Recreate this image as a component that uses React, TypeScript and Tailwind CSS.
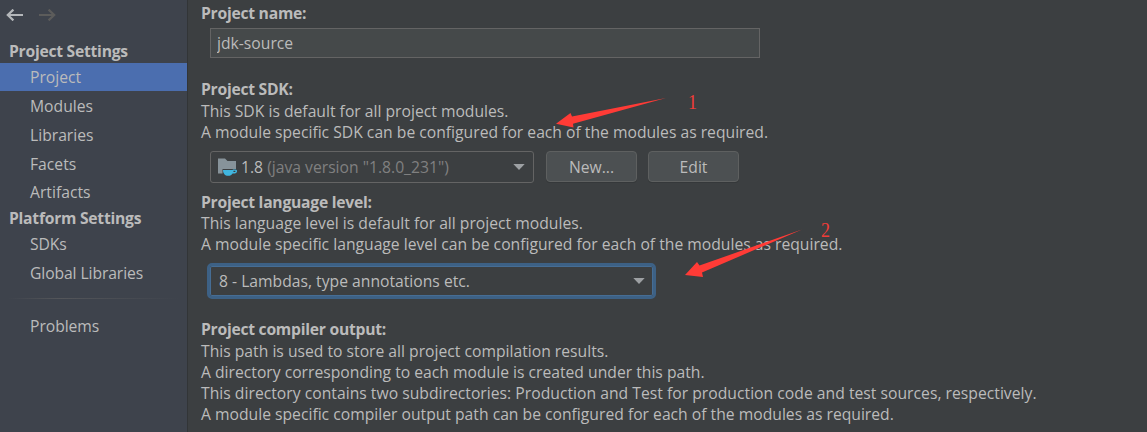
import type { ReactNode } from 'react';

type SideItem = { label: string; selected?: boolean };

const projectItems: SideItem[] = [
  { label: 'Project', selected: true },
  { label: 'Modules' },
  { label: 'Libraries' },
  { label: 'Facets' },
  { label: 'Artifacts' },
];

function NavItem({ label, selected }: SideItem) {
  return (
    <li className={selected ? 'flex h-7 items-center bg-[#4b6eaf] pl-[30px] pt-0.5' : 'flex h-7 items-center pl-[30px] pt-0.5'}>
      {label}
    </li>
  );
}

function NavHeading({ children }: { children: ReactNode }) {
  return <h2 className="pl-[9px] font-bold leading-[21px] tracking-[-0.26px]">{children}</h2>;
}

function Heading({ children }: { children: ReactNode }) {
  return <h3 className="font-bold leading-[21px] tracking-[-0.26px]">{children}</h3>;
}

function Caret() {
  return (
    <svg className="h-[6px] w-[12px] shrink-0" viewBox="0 0 12 6">
      <path d="M0.3 0H11.7L6 6Z" fill="#9da0a3" />
    </svg>
  );
}

function JdkIcon() {
  return (
    <svg className="h-[18px] w-[20px] shrink-0" viewBox="0 0 20 18">
      <path d="M0 0.5H7L9.5 3H18V11H4.5V15.5H0Z" fill="#87939a" />
      <path d="M5 12H14.8V11.6H17.3C19.8 11.6 19.8 15.4 16.6 15.4H14.6C13.6 17 12.3 17.8 10.2 17.8C7 17.8 5 15.5 5 12Z" fill="#40b6e0" />
      <path d="M15.6 12.8H17.4V14.1H15.3Z" fill="#3c3f41" />
    </svg>
  );
}

function PushButton({ children }: { children: ReactNode }) {
  return (
    <button className="h-[31px] w-[91px] rounded-[4px] border border-[#5e6060] bg-[#4c5052] leading-[30px] shadow-[0_1px_0_#35383a]">
      {children}
    </button>
  );
}

export default function App() {
  return (
    <div className="relative flex h-[432px] w-[1147px] overflow-hidden bg-[#3c3f41] font-['Open_Sans','Noto_Sans',sans-serif] text-[15.7px] text-[#bbbbbb]">
      <nav className="flex w-[188px] shrink-0 flex-col border-r border-[#323537] bg-[#3e434c]">
        <div className="flex h-[41px] gap-4 pl-1.5 pt-[9px]">
          <svg className="h-3 w-[17px]" viewBox="0 0 17 12" fill="none" stroke="#b4b7ba" strokeWidth="2.2">
            <path d="M17 6H1.8M7.4 0.6L1.8 6L7.4 11.4" />
          </svg>
          <svg className="h-3 w-[17px]" viewBox="0 0 17 12" fill="none" stroke="#5c5c5b" strokeWidth="2.2">
            <path d="M0 6H15.2M9.6 0.6L15.2 6L9.6 11.4" />
          </svg>
        </div>
        <NavHeading>Project Settings</NavHeading>
        <ul className="mt-px flex flex-col gap-[0.8px]">
          {projectItems.map((item) => (
            <NavItem key={item.label} {...item} />
          ))}
        </ul>
        <div className="mt-[1.8px]">
          <NavHeading>Platform Settings</NavHeading>
        </div>
        <ul className="mt-px flex flex-col gap-px tracking-[-0.1px]">
          <NavItem label="SDKs" />
          <NavItem label="Global Libraries" />
        </ul>
        <div className="mx-2 mt-[11px] h-px bg-linear-to-r from-transparent via-[#54565a] via-30% to-transparent" />
        <ul className="mt-[13px] tracking-[-0.05px]">
          <NavItem label="Problems" />
        </ul>
      </nav>

      <main className="flex flex-1 flex-col pl-[13px] pt-[3px] leading-[21px]">
        <Heading>Project name:</Heading>
        <input
          className="ml-[9px] mt-[4px] h-[30px] w-[550px] border border-[#646464] bg-[#45494a] px-1.5 outline-none"
          defaultValue="jdk-source"
        />

        <div className="mt-[21px]">
          <Heading>Project SDK:</Heading>
          <p className="mt-px">This SDK is default for all project modules.</p>
          <p>A module specific SDK can be configured for each of the modules as required.</p>
        </div>
        <div className="ml-[9px] mt-2 flex h-8 items-start">
          <div className="flex h-8 w-[324px] items-center rounded-[3px] border border-[#646464] pl-[7px] pr-[8px]">
            <JdkIcon />
            <span className="ml-[3px] flex-1 pt-px">
              1.8 <span className="text-[#808080]">(java version "1.8.0_231")</span>
            </span>
            <Caret />
          </div>
          <div className="ml-3 flex gap-[11px]">
            <PushButton>New...</PushButton>
            <PushButton>Edit</PushButton>
          </div>
        </div>

        <div className="mt-[9px]">
          <Heading>Project language level:</Heading>
          <p>This language level is default for all project modules.</p>
          <p>A module specific language level can be configured for each of the modules as required.</p>
        </div>
        <div className="ml-1.5 mt-2 flex h-9 w-[449px] items-center rounded-[5px] border-[3px] border-[#3d6185] pl-[9px] pr-[8px] shadow-[inset_0_0_0_1px_#466d94]">
          <span className="flex-1">8 - Lambdas, type annotations etc.</span>
          <Caret />
        </div>

        <div className="mt-5">
          <Heading>Project compiler output:</Heading>
          <p className="mt-px">This path is used to store all project compilation results.</p>
          <p>A directory corresponding to each module is created under this path.</p>
          <p className="tracking-[0.017px]">This directory contains two subdirectories: Production and Test for production code and test sources, respectively.</p>
          <p>A module specific compiler output path can be configured for each of the modules as required.</p>
        </div>
      </main>

      <svg className="pointer-events-none absolute inset-0 h-[432px] w-[1147px]" viewBox="0 0 1147 432" fill="#ff3b36">
        <path d="M556 123.7L570.5 113L572 116.5L666 98L573 123.7L573.5 127.5Z" />
        <path d="M685 275L697 262L699.5 265.5L802 229.5L702 272.5L703 277Z" />
      </svg>
      <span className="absolute left-[688px] top-[92px] origin-left scale-x-90 font-['Liberation_Serif',serif] text-[20px] leading-[20px] text-[#f23c38]">1</span>
      <span className="absolute left-[821px] top-[220px] origin-left scale-x-90 font-['Liberation_Serif',serif] text-[20px] leading-[20px] text-[#f23c38]">2</span>
    </div>
  );
}
